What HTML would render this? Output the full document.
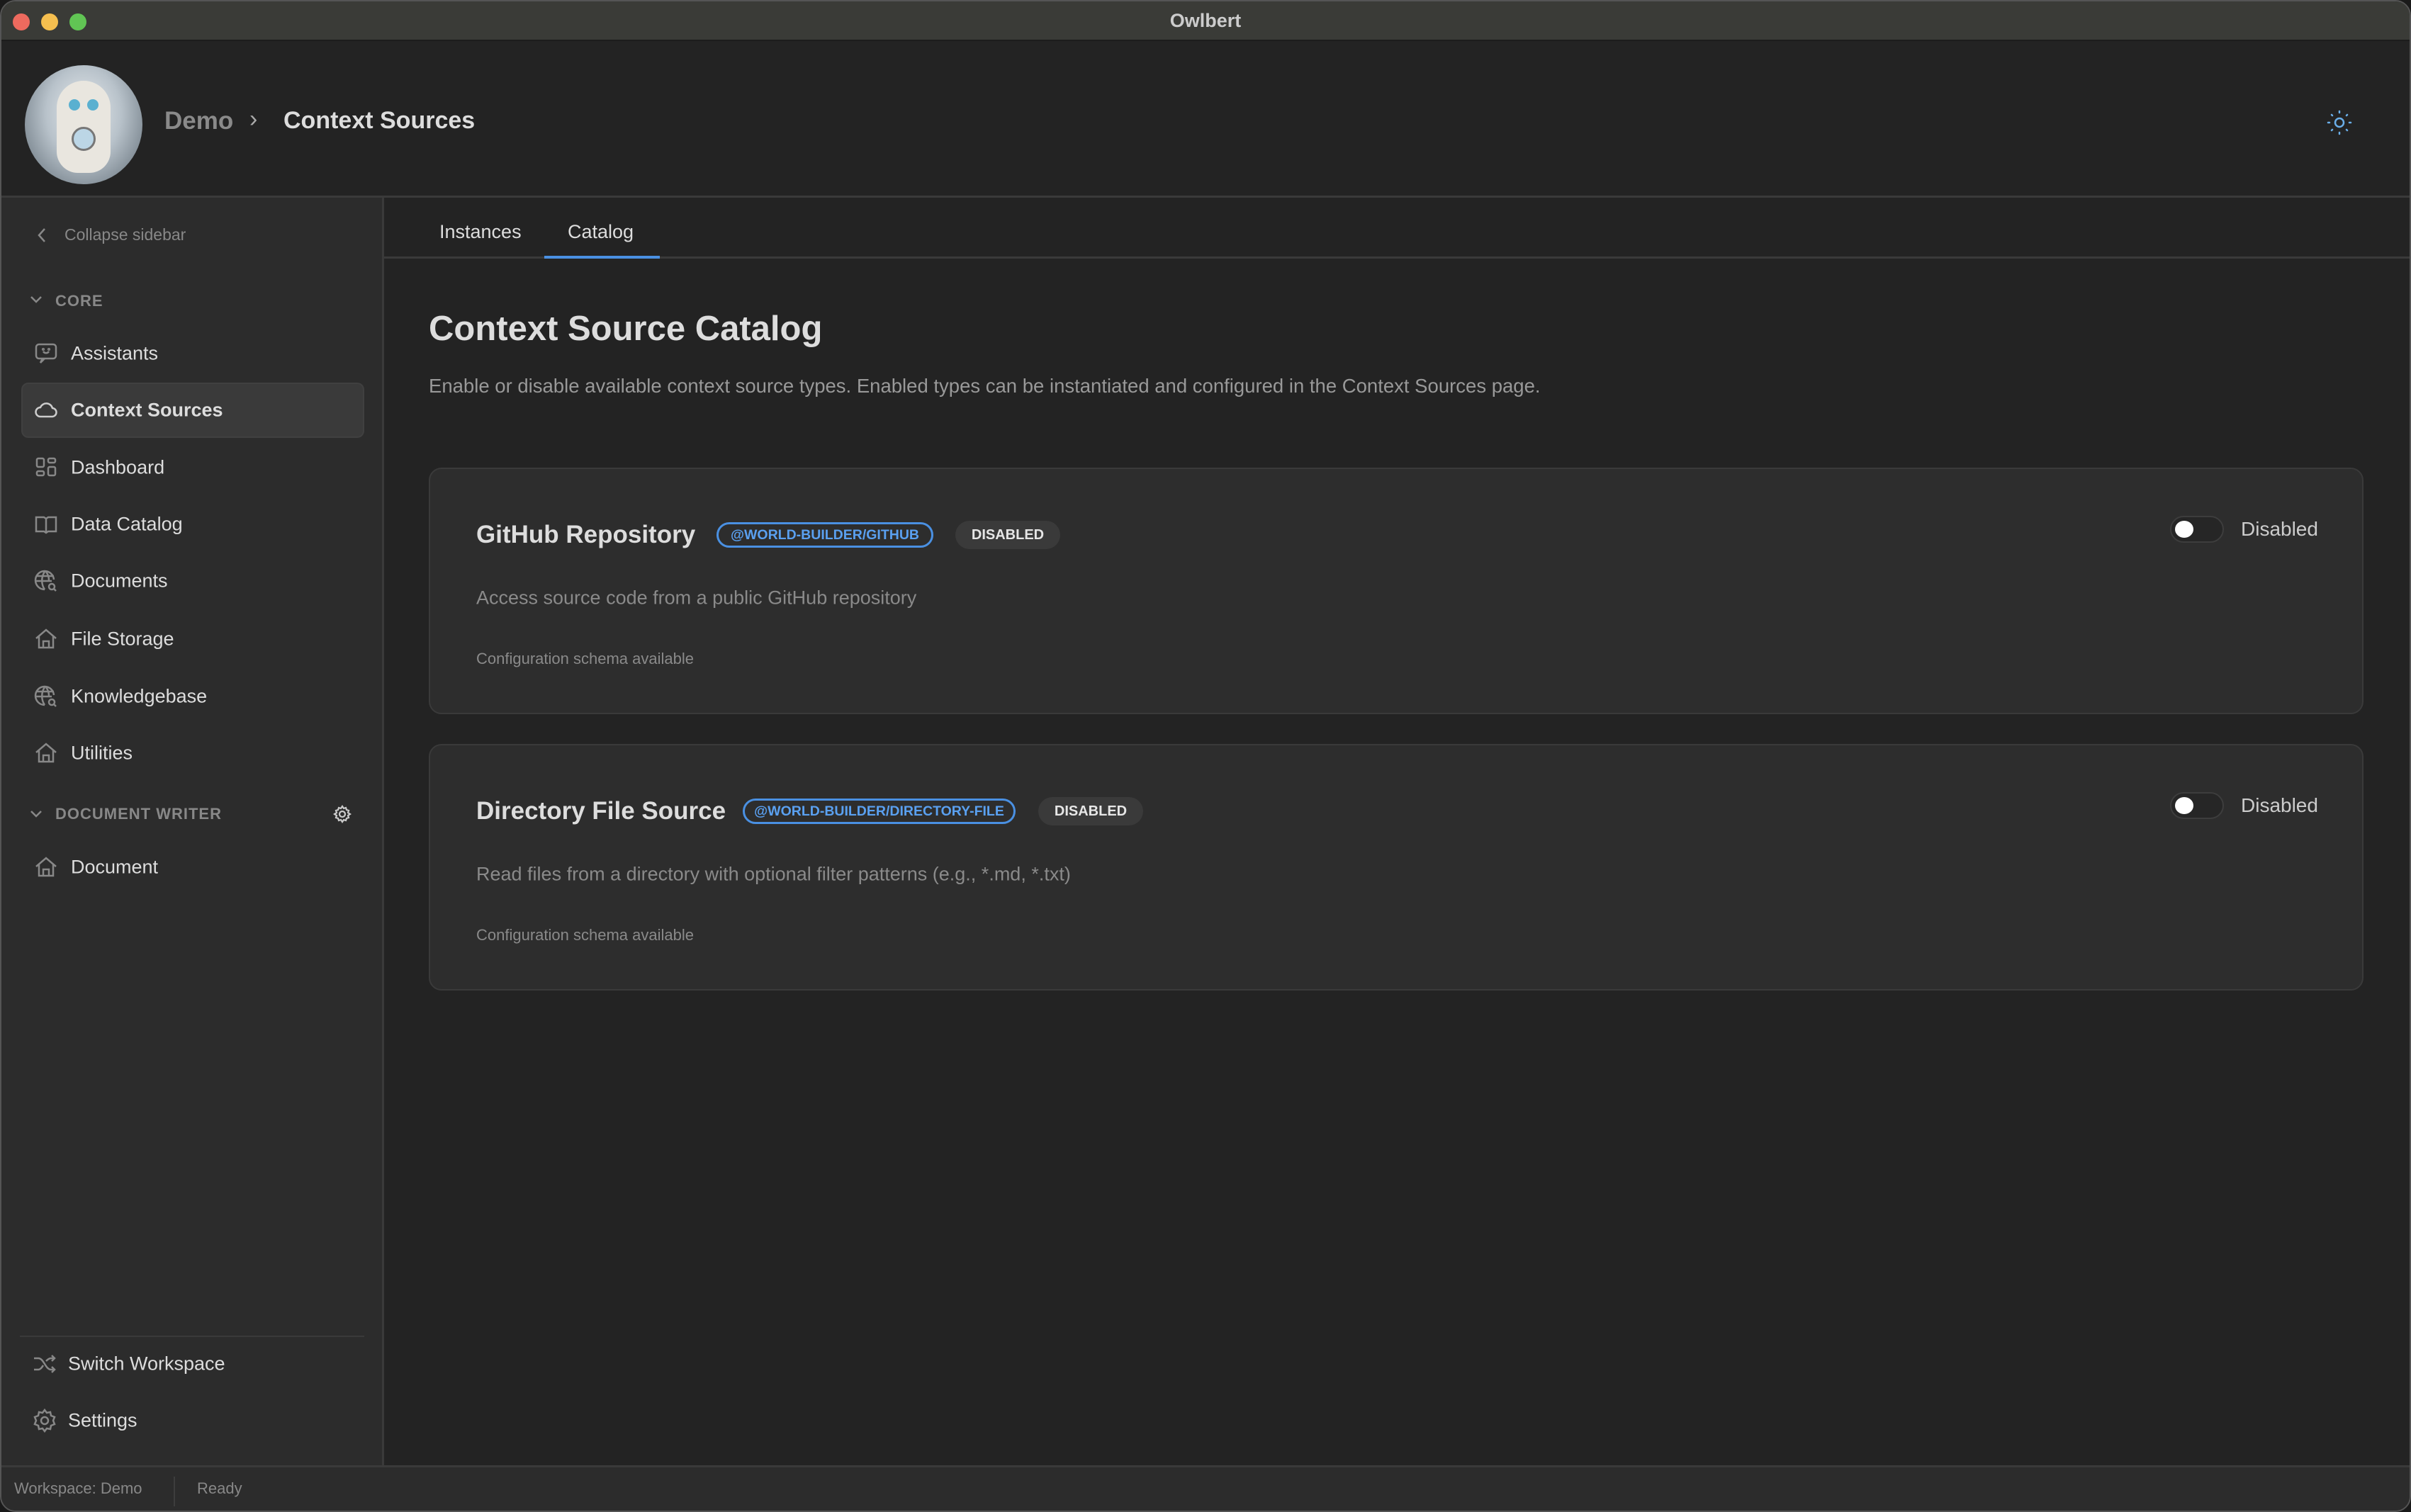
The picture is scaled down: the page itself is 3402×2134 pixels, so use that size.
<!DOCTYPE html>
<html><head><meta charset="utf-8"><style>
*{margin:0;padding:0;box-sizing:border-box}
body{width:3402px;height:2134px;background:#1a1a1a;font-family:"Liberation Sans",sans-serif;overflow:hidden;position:relative}
.win{position:absolute;left:0;top:0;width:3402px;height:2134px;border-radius:22px;overflow:hidden;background:#232323;border:2px solid #555}
.abs{position:absolute;white-space:nowrap}
.tb{position:absolute;left:0;top:0;width:100%;height:56px;background:#3a3b37;border-bottom:2px solid #1c1c1c}
.dot{position:absolute;top:17px;width:24px;height:24px;border-radius:50%}
.hdr{position:absolute;left:0;top:58px;width:100%;height:219px;background:#232323;border-bottom:3px solid #3a3a3a}
.side{position:absolute;left:0;top:277px;width:540px;height:1791px;background:#2c2c2c;border-right:3px solid #3a3a3a}
.item{position:absolute;left:100px;font-size:27px;color:#ddd;transform:translateY(-50%)}
.ic{position:absolute;left:48px;width:34px;height:34px;transform:translateY(-50%)}
.status{position:absolute;left:0;top:2066px;width:100%;height:68px;background:#2c2c2c;border-top:3px solid #3a3a3a}
.card{position:absolute;left:605px;width:2730px;height:348px;background:#2d2d2d;border:2px solid #3a3a3a;border-radius:18px}
.ctitle{position:absolute;left:65px;font-size:35px;font-weight:bold;color:#ddd;transform:translateY(-50%)}
.badge{position:absolute;height:36px;border:3px solid #4a90e2;border-radius:18px;color:#5aa0f0;font-size:19.5px;font-weight:bold;display:flex;align-items:center;justify-content:center;transform:translateY(-50%)}
.dis{position:absolute;height:40px;background:#3a3a3a;border-radius:20px;color:#e6e6e6;font-size:20px;font-weight:bold;display:flex;align-items:center;justify-content:center;transform:translateY(-50%)}
.cdesc{position:absolute;left:65px;font-size:27px;color:#8a8a8a;transform:translateY(-50%)}
.conf{position:absolute;left:65px;font-size:22px;color:#8a8a8a;transform:translateY(-50%)}
.tog{position:absolute;left:2455px;width:76px;height:38px;border:2px solid #3d3d3d;border-radius:19px;background:#262626;transform:translateY(-50%)}
.tog:after{content:"";position:absolute;left:5px;top:5px;width:26px;height:24px;border-radius:50%;background:#fff}
.tl{position:absolute;left:2555px;font-size:28px;color:#ccc;transform:translateY(-50%)}
svg{overflow:visible}
</style></head><body><div class="win">
<div class="tb">
<div class="dot" style="left:16px;background:#ed6a5e"></div>
<div class="dot" style="left:56px;background:#f5bf4f"></div>
<div class="dot" style="left:96px;background:#61c554"></div>
<div class="abs" style="left:0;width:100%;text-align:center;top:12px;font-size:27px;font-weight:bold;color:#ccc">Owlbert</div>
</div>
<div class="hdr">
<div style="position:absolute;left:33px;top:32px;width:166px;height:168px;border-radius:50%;background:radial-gradient(ellipse at 50% 40%,#e8ecef 0%,#b8c2ca 45%,#5a6670 100%)">
<div style="position:absolute;left:45px;top:22px;width:76px;height:130px;border-radius:38px 38px 30px 30px;background:#e9e6df"></div>
<div style="position:absolute;left:62px;top:48px;width:16px;height:16px;border-radius:50%;background:#5ab0d0"></div>
<div style="position:absolute;left:88px;top:48px;width:16px;height:16px;border-radius:50%;background:#5ab0d0"></div>
<div style="position:absolute;left:66px;top:87px;width:34px;height:34px;border-radius:50%;background:#bcd6e6;border:3px solid #777"></div>
</div>
<div class="abs" style="left:230px;top:91px;font-size:35px;font-weight:bold;color:#8a8a8a">Demo</div>
<div class="abs" style="left:350px;top:89px;font-size:34px;color:#aaa">›</div>
<div class="abs" style="left:398px;top:91px;font-size:34px;font-weight:bold;color:#ddd">Context Sources</div>
<svg class="abs" style="left:3282px;top:96px" width="34" height="34" viewBox="0 0 34 34" fill="none" stroke="#6aaee8" stroke-width="2.5" stroke-linecap="round"><circle cx="17" cy="17" r="6"/><path d="M17 1v2M17 31v2M1 17h2M31 17h2M6 6l1 1M27 27l1 1M6 28l1-1M27 7l1-1"/></svg>
</div>
<div class="side">
<svg class="abs" style="left:50px;top:42px" width="14" height="22" viewBox="0 0 14 22" fill="none" stroke="#888" stroke-width="2.5"><path d="M11 2L3 11l8 9"/></svg>
<div class="abs" style="left:89px;top:39px;font-size:23px;color:#888">Collapse sidebar</div>
<svg class="abs" style="left:40px;top:138px" width="18" height="12" viewBox="0 0 18 12" fill="none" stroke="#888" stroke-width="2.5"><path d="M2 2l7 7 7-7"/></svg>
<div class="abs" style="left:76px;top:133px;font-size:22px;font-weight:bold;color:#888;letter-spacing:1px">CORE</div>
<div style="position:absolute;left:28px;top:261px;width:484px;height:78px;background:#3a3a3a;border:2px solid #404040;border-radius:10px"></div>
<svg class="ic" style="top:220px;left:46px" viewBox="0 0 34 34" fill="none" stroke="#888" stroke-width="2.5"><rect x="3" y="4" width="28" height="20" rx="4"/><path d="M12 24l-3 6 6-6M13 14c2 3 6 3 8 0"/><circle cx="13" cy="11" r=".8"/><circle cx="21" cy="11" r=".8"/></svg>
<div class="item" style="top:220px;left:98px">Assistants</div>
<svg class="ic" style="top:300px;left:46px" viewBox="0 0 34 34" fill="none" stroke="#ccc" stroke-width="2.5"><path d="M9 26h16a6 6 0 0 0 1-12 9 9 0 0 0-17-1A6.5 6.5 0 0 0 9 26z"/></svg>
<div class="item" style="top:300px;left:98px;font-weight:bold">Context Sources</div>
<svg class="ic" style="top:381px;left:46px" viewBox="0 0 34 34" fill="none" stroke="#888" stroke-width="2.5"><rect x="4" y="4" width="10" height="12" rx="2"/><rect x="20" y="4" width="10" height="6" rx="2"/><rect x="4" y="22" width="10" height="6" rx="2"/><rect x="20" y="16" width="10" height="12" rx="2"/></svg>
<div class="item" style="top:381px;left:98px">Dashboard</div>
<svg class="ic" style="top:461px;left:46px" viewBox="0 0 34 34" fill="none" stroke="#888" stroke-width="2.5"><path d="M3 7h11l3 2 3-2h11v20H20l-3 2-3-2H3zM17 9v20"/></svg>
<div class="item" style="top:461px;left:98px">Data Catalog</div>
<svg class="ic" style="top:541px;left:46px" viewBox="0 0 34 34" fill="none" stroke="#888" stroke-width="2.5"><path d="M28 15A13 13 0 1 0 15 29M3 17h22M4 10h24M15 4c-5 7-5 18 0 25M17 4c3 4 4 8 4 12"/><circle cx="25" cy="25" r="4"/><path d="M28 28l3 3"/></svg>
<div class="item" style="top:541px;left:98px">Documents</div>
<svg class="ic" style="top:623px;left:46px" viewBox="0 0 34 34" fill="none" stroke="#888" stroke-width="2.5"><path d="M3 16L17 4l14 12M7 13v16h20V13M13 29v-9h8v9"/></svg>
<div class="item" style="top:623px;left:98px">File Storage</div>
<svg class="ic" style="top:704px;left:46px" viewBox="0 0 34 34" fill="none" stroke="#888" stroke-width="2.5"><path d="M28 15A13 13 0 1 0 15 29M3 17h22M4 10h24M15 4c-5 7-5 18 0 25M17 4c3 4 4 8 4 12"/><circle cx="25" cy="25" r="4"/><path d="M28 28l3 3"/></svg>
<div class="item" style="top:704px;left:98px">Knowledgebase</div>
<svg class="ic" style="top:784px;left:46px" viewBox="0 0 34 34" fill="none" stroke="#888" stroke-width="2.5"><path d="M3 16L17 4l14 12M7 13v16h20V13M13 29v-9h8v9"/></svg>
<div class="item" style="top:784px;left:98px">Utilities</div>
<svg class="abs" style="left:40px;top:864px" width="18" height="12" viewBox="0 0 18 12" fill="none" stroke="#888" stroke-width="2.5"><path d="M2 2l7 7 7-7"/></svg>
<div class="abs" style="left:76px;top:857px;font-size:22px;font-weight:bold;color:#888;letter-spacing:1px">DOCUMENT WRITER</div>
<svg class="abs" style="left:468px;top:857px" width="26" height="26" viewBox="0 0 26 26" fill="none" stroke="#ccc" stroke-width="2.2"><circle cx="13" cy="13" r="4"/><path d="M13 2l2 3 3-1 1 3 3 1-1 3 3 2-3 2 1 3-3 1-1 3-3-1-2 3-2-3-3 1-1-3-3-1 1-3-3-2 3-2-1-3 3-1 1-3 3 1z"/></svg>
<svg class="ic" style="top:945px;left:46px" viewBox="0 0 34 34" fill="none" stroke="#888" stroke-width="2.5"><path d="M3 16L17 4l14 12M7 13v16h20V13M13 29v-9h8v9"/></svg>
<div class="item" style="top:945px;left:98px">Document</div>
<div style="position:absolute;left:26px;top:1606px;width:486px;height:2px;background:#3a3a3a"></div>
<svg class="ic" style="top:1646px;left:44px" viewBox="0 0 34 34" fill="none" stroke="#888" stroke-width="2.5"><path d="M2 9h6c8 0 10 16 18 16h5M2 25h6c3 0 5-3 7-6M19 13c2-2 4-4 7-4h5M27 5l4 4-4 4M27 21l4 4-4 4"/></svg>
<div class="item" style="top:1646px;left:94px">Switch Workspace</div>
<svg class="ic" style="top:1726px;left:44px" viewBox="0 0 34 34" fill="none" stroke="#888" stroke-width="2.5"><circle cx="17" cy="17" r="5"/><path d="M17 2l3 4 5-1 1 5 5 2-2 5 2 5-5 2-1 5-5-1-3 4-3-4-5 1-1-5-5-2 2-5-2-5 5-2 1-5 5 1z"/></svg>
<div class="item" style="top:1726px;left:94px">Settings</div>
</div>
<div class="status">
<div class="abs" style="left:18px;top:17px;font-size:22px;color:#888">Workspace: Demo</div>
<div style="position:absolute;left:243px;top:13px;width:2px;height:42px;background:#3d3d3d"></div>
<div class="abs" style="left:276px;top:17px;font-size:22px;color:#888">Ready</div>
</div>
<div style="position:absolute;left:540px;top:360px;width:2858px;height:3px;background:#3a3a3a"></div>
<div class="abs" style="left:618px;top:310px;font-size:27px;color:#ddd">Instances</div>
<div class="abs" style="left:799px;top:310px;font-size:27px;color:#ddd">Catalog</div>
<div style="position:absolute;left:766px;top:359px;width:163px;height:4px;background:#4a90e2"></div>
<div class="abs" style="left:603px;top:434px;font-size:49px;font-weight:bold;color:#ddd">Context Source Catalog</div>
<div class="abs" style="left:603px;top:527px;font-size:27.5px;color:#999">Enable or disable available context source types. Enabled types can be instantiated and configured in the Context Sources page.</div>
<div class="card" style="top:658px;left:603px">
<div class="ctitle" style="top:93px">GitHub Repository</div>
<div class="badge" style="left:404px;width:306px;top:93px">@WORLD-BUILDER/GITHUB</div>
<div class="dis" style="left:741px;width:148px;top:93px">DISABLED</div>
<div class="cdesc" style="top:182px">Access source code from a public GitHub repository</div>
<div class="conf" style="top:268px">Configuration schema available</div>
<div class="tog" style="top:85px"></div>
<div class="tl" style="top:85px">Disabled</div>
</div>
<div class="card" style="top:1048px;left:603px">
<div class="ctitle" style="top:93px">Directory File Source</div>
<div class="badge" style="left:441px;width:385px;top:93px">@WORLD-BUILDER/DIRECTORY-FILE</div>
<div class="dis" style="left:858px;width:148px;top:93px">DISABLED</div>
<div class="cdesc" style="top:182px">Read files from a directory with optional filter patterns (e.g., *.md, *.txt)</div>
<div class="conf" style="top:268px">Configuration schema available</div>
<div class="tog" style="top:85px"></div>
<div class="tl" style="top:85px">Disabled</div>
</div>
</div></body></html>
